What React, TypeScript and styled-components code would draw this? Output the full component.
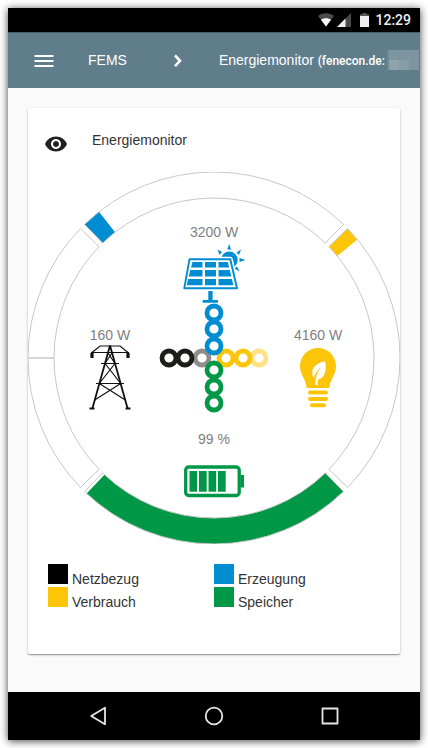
import React from "react";
import styled, { createGlobalStyle } from "styled-components";

const sans = `"Liberation Sans", Arial, sans-serif`;
const BLUE = "#008dd2";
const YELLOW = "#fdc507";
const GREEN = "#009846";
const BLACK = "#000000";

const GlobalStyle = createGlobalStyle`
  *, *::before, *::after { box-sizing: border-box; }
  body { margin: 0; background: #fff; font-family: ${sans}; font-size: 14px; line-height: 20px; }
`;

const Page = styled.div`
  min-height: 100vh;
  padding: 8px;
  display: flex;
`;

const Phone = styled.div`
  flex: 1;
  min-width: 0;
  display: flex;
  flex-direction: column;
  background: #fafafa;
  box-shadow: 0 1px 8px rgba(0, 0, 0, 0.75);
`;

const StatusBar = styled.div`
  height: 24px;
  padding: 0 9px;
  display: flex;
  align-items: center;
  justify-content: flex-end;
  gap: 3px;
  background: #000;
`;

const Battery = styled.svg`
  margin: 0 3px 0 6px;
`;

const Clock = styled.time`
  font: 500 14px/24px Roboto, ${sans};
  color: #eee;
`;

const Toolbar = styled.header`
  height: 56px;
  padding-left: 16px;
  display: flex;
  align-items: center;
  overflow: hidden;
  background: #607d8b;
  box-shadow: inset 0 1px 0 #4b5f69;
  color: #fff;
  white-space: nowrap;
`;

const IconButton = styled.button`
  width: 40px;
  height: 40px;
  flex: none;
  padding: 2px 0 0;
  border: 0;
  background: none;
  color: inherit;
  display: grid;
  place-items: center;
  cursor: pointer;
`;

const HomeLink = styled.a`
  margin-left: 24px;
  color: inherit;
  text-decoration: none;
`;

const Chevron = styled.svg`
  flex: none;
  margin: 0 29px 0 39px;
`;

const Crumb = styled.h1`
  margin: 0;
  font-size: 14px;
  font-weight: 400;
`;

const Device = styled.small`
  font: 500 12px/20px Roboto, ${sans};
`;

const Mosaic = styled.svg`
  flex: none;
`;

const Main = styled.main`
  flex: 1;
  display: flex;
  padding: 20px 20px 38px;
`;

const Card = styled.section`
  flex: 1;
  min-width: 0;
  background: #fff;
  border-radius: 2px;
  box-shadow: 0 1px 3px rgba(0, 0, 0, 0.2), 0 1px 1px rgba(0, 0, 0, 0.3);
`;

const CardHeader = styled.div`
  height: 64px;
  padding: 0 16px;
  display: flex;
  align-items: center;
  gap: 24px;
  color: #212121;
`;

const EyeIcon = styled.svg`
  margin-top: 8px;
`;

const CardTitle = styled.h2`
  margin: 0;
  font-size: 14px;
  font-weight: 400;
  color: #333;
`;

const Chart = styled.svg`
  display: block;
  width: 100%;
  height: auto;
`;

const ChartLabel = styled.text`
  font: 14px ${sans};
  fill: #808080;
  text-anchor: middle;
`;

const Legend = styled.ul`
  list-style: none;
  margin: 0;
  padding: 20px 20px 47px;
  display: grid;
  grid-template-columns: 1fr 1fr;
  row-gap: 3px;
`;

const LegendItem = styled.li`
  height: 20px;
  display: flex;
  align-items: baseline;
  gap: 4px;
  color: #333;
`;

const Swatch = styled.span<{ $color: string }>`
  width: 20px;
  height: 20px;
  background: ${(p) => p.$color};
`;

const NavBar = styled.nav`
  height: 48px;
  padding: 0 32px;
  display: flex;
  background: #000;
`;

const NavButton = styled.button`
  flex: 1;
  padding: 0;
  border: 0;
  background: none;
  display: grid;
  place-items: center;
  cursor: pointer;
`;

const OUTER = 186;
const INNER = 160;

function polar(radius: number, degrees: number) {
  const a = (degrees * Math.PI) / 180;
  return `${(radius * Math.sin(a)).toFixed(2)} ${(-radius * Math.cos(a)).toFixed(2)}`;
}

/* Ring segment between two angles, measured clockwise from the top. */
function segment(from: number, to: number) {
  return `M${polar(OUTER, from)}A${OUTER} ${OUTER} 0 0 1 ${polar(OUTER, to)}L${polar(INNER, to)}A${INNER} ${INNER} 0 0 0 ${polar(INNER, from)}Z`;
}

const sections = [
  [-44.1, 44.1],
  [45.9, 134.1],
  [135.9, 224.1],
  [225.9, 270],
  [270, 314.1],
];

const values = [
  { from: -44.1, to: -38.2, color: BLUE },
  { from: 45.9, to: 50.4, color: YELLOW },
  { from: 135.9, to: 223.2, color: GREEN },
];

const flow = [
  { x: -45, y: 0, color: "#1d1d1b", opacity: 1 },
  { x: -12, y: 0, color: "#1d1d1b", opacity: 0.5 },
  { x: -29, y: 0, color: "#1d1d1b", opacity: 1 },
  { x: 45, y: 0, color: YELLOW, opacity: 0.5 },
  { x: 29, y: 0, color: YELLOW, opacity: 1 },
  { x: 12, y: 0, color: YELLOW, opacity: 1 },
  { x: 0, y: -12, color: BLUE, opacity: 1 },
  { x: 0, y: -29, color: BLUE, opacity: 1 },
  { x: 0, y: -45, color: BLUE, opacity: 1 },
  { x: 0, y: 12, color: GREEN, opacity: 1 },
  { x: 0, y: 29, color: GREEN, opacity: 1 },
  { x: 0, y: 45, color: GREEN, opacity: 1 },
];

const legend = [
  { label: "Netzbezug", color: BLACK },
  { label: "Erzeugung", color: BLUE },
  { label: "Verbrauch", color: YELLOW },
  { label: "Speicher", color: GREEN },
];

function Pylon() {
  return (
    <g transform="translate(-104 0.5)" fill="none" stroke="#111" strokeWidth="1.2">
      <path strokeWidth="1.8" d="M0-13L-17.6 50M0-13L17.6 50" />
      <path d="M-18-6L-10-12.500H10L18-6M-19-6H19M-9 5H9M-14 25H14" />
      <path d="M-2.300-6L5 5M2.300-6L-5 5M-5 5L10.700 25M5 5L-10.700 25M-10.700 25L15.300 41.500M10.700 25L-15.300 41.500" />
      <path strokeWidth="3.200" d="M-18-5.500V-.5M18-5.500V-.5" />
      <path strokeWidth="2" d="M-20.500 50H-15.500M15.500 50H20.500" />
    </g>
  );
}

function SolarPanel() {
  return (
    <g fill={BLUE}>
      <circle cx="15.300" cy="-98" r="8.400" />
      <path d="M13.300-108.500h3.800l-1.900-5.500zM3.500-108.500l4.500 2.500-2.500 3zM27-108.500l-2 5.500-2.500-2.500zM25.500-100v4l6-2zM20.500-89.500l2.500-2 2.500 5z" />
      <path stroke="#fff" strokeWidth="4.500" strokeLinejoin="round" fill="#fff" d="M-25-99H16.500L23.500-70H-30.500Z" />
      <path stroke={BLUE} strokeWidth="1.900" strokeLinejoin="round" fill="#fff" d="M-24.500-98.800H16.300L23-69.800H-29.700Z" />
      <path d="M-21.500-96H-11.500V-90.500H-23zM-9-96H2V-90.500H-9zM4.500-96H13.800L15.200-90.500H4.500zM-23.700-88H-11.500V-81.500H-25.300zM-9-88H2V-81.500H-9zM4.500-88H15.800L17.300-81.500H4.500zM-25.900-79H-11.500V-72.700H-27.400zM-9-79H2V-72.700H-9zM4.500-79H17.900L19.400-72.700H4.500z" />
      <path d="M-5.700-67h4.300v9H4v2.700H-11.300V-58h5.600z" />
    </g>
  );
}

function Bulb() {
  return (
    <g transform="translate(104 8)" fill={YELLOW}>
      <path d="M0-18C10-18 18-10 18 0C18 9 12 13 11.300 22H-11.300C-12 13-18 9-18 0C-18-10-10-18 0-18Z" />
      <rect x="-10" y="24.500" width="20" height="4" rx="2" />
      <rect x="-10" y="31" width="20" height="4" rx="2" />
      <rect x="-8" y="37.300" width="16" height="4" rx="2" />
      <path fill="#fff" d="M7.300-4.500C1-4-5.500 0-5.700 6C-5.800 9-5 11-3.800 12.300C-3.600 8 0 3.500 2.700 1.500C0 5.500-2 9-1.800 12C-2.800 14-3 17-2.600 19H-.3C-.6 17-.4 15.500.2 13.500C7 12 8.500 4 7.300-4.500Z" />
    </g>
  );
}

function StorageBattery() {
  return (
    <g fill={GREEN}>
      <rect x="-28.300" y="109" width="53.500" height="28.500" rx="3" fill="none" stroke={GREEN} strokeWidth="3.300" />
      <rect x="26.500" y="117" width="3.500" height="12.500" />
      {[-24.5, -15, -5.5, 4].map((x) => (
        <rect key={x} x={x} y="113" width="7.700" height="20.700" />
      ))}
    </g>
  );
}

export default function App() {
  return (
    <Page>
      <GlobalStyle />
      <Phone>
        <StatusBar>
          <svg width="16" height="14" viewBox="0 0 16 14" aria-hidden="true">
            <path fill="#4a4a4a" d="M0 3C4.500-.6 11.500-.6 16 3L8 13.500Z" />
            <path fill="#fff" d="M3 6.800C6 4.800 10 4.800 13 6.800L8 13.500Z" />
          </svg>
          <svg width="14" height="14" viewBox="0 0 14 14" aria-hidden="true">
            <path fill="#4a4a4a" d="M14 0V14H0Z" />
            <path fill="#eee" d="M8.500 5.500V14H0Z" />
          </svg>
          <Battery width="9" height="14" viewBox="0 0 9 14" aria-hidden="true">
            <path fill="#555" d="M2.500 0h4v1.200H9V4H0V1.200h2.500z" />
            <path fill="#eee" d="M0 3h9v11H0z" />
          </Battery>
          <Clock>12:29</Clock>
        </StatusBar>

        <Toolbar>
          <IconButton type="button" aria-label="Menü">
            <svg width="20" height="14" viewBox="0 0 20 14" aria-hidden="true">
              <path stroke="#fff" strokeWidth="2" d="M.5 2h19M.5 7h19M.5 12h19" />
            </svg>
          </IconButton>
          <HomeLink href="#">FEMS</HomeLink>
          <Chevron width="24" height="24" viewBox="0 0 24 24" aria-hidden="true">
            <path fill="none" stroke="#fff" strokeWidth="2.600" d="M9 7.500L14 12.800L9 18.100" />
          </Chevron>
          <Crumb>
            Energiemonitor <Device>(fenecon.de:</Device>
          </Crumb>
          <Mosaic width="34" height="20" viewBox="0 0 34 20" aria-hidden="true">
            <path fill="#6e8996" d="M2 0h2v20H2z" />
            <path fill="#7d95a0" d="M4 0h30v20H4z" />
            <path fill="#8fa3ad" d="M4 10h10v10H4z" />
            <path fill="#879ca7" d="M14 10h10v10H14z" />
          </Mosaic>
        </Toolbar>

        <Main>
          <Card>
            <CardHeader>
              <EyeIcon width="24" height="24" viewBox="0 0 24 24" fill="currentColor" aria-hidden="true">
                <path d="M12 4.500C7 4.500 2.730 7.610 1 12c1.730 4.390 6 7.500 11 7.500s9.270-3.110 11-7.500c-1.730-4.390-6-7.500-11-7.500zM12 17c-2.760 0-5-2.240-5-5s2.240-5 5-5 5 2.240 5 5-2.240 5-5 5zm0-8c-1.660 0-3 1.340-3 3s1.340 3 3 3 3-1.340 3-3-1.340-3-3-3z" />
              </EyeIcon>
              <CardTitle>Energiemonitor</CardTitle>
            </CardHeader>

            <Chart viewBox="-186 -186 372 372" role="img" aria-label="Energiemonitor">
              {values.map((v) => (
                <path key={v.color} d={segment(v.from, v.to)} fill={v.color} />
              ))}
              {sections.map(([from, to]) => (
                <path key={from} d={segment(from, to)} fill="none" stroke="#c8c8c8" />
              ))}
              {flow.map((c) => (
                <circle key={`${c.x},${c.y}`} cx={c.x} cy={c.y} r="7" fill="none" stroke={c.color} strokeWidth="4.800" opacity={c.opacity} />
              ))}
              <SolarPanel />
              <Pylon />
              <Bulb />
              <StorageBattery />
              <ChartLabel x="0" y="-121">3200 W</ChartLabel>
              <ChartLabel x="-104" y="-18">160 W</ChartLabel>
              <ChartLabel x="104" y="-18">4160 W</ChartLabel>
              <ChartLabel x="0" y="86">99 %</ChartLabel>
            </Chart>

            <Legend>
              {legend.map((item) => (
                <LegendItem key={item.label}>
                  <Swatch $color={item.color} />
                  {item.label}
                </LegendItem>
              ))}
            </Legend>
          </Card>
        </Main>

        <NavBar>
          <NavButton type="button" aria-label="Zurück">
            <svg width="20" height="20" viewBox="0 0 20 20" fill="none" stroke="#e6e6e6" strokeWidth="1.800" strokeLinejoin="round" aria-hidden="true">
              <path d="M17 1.800V18.200L3.200 10Z" />
            </svg>
          </NavButton>
          <NavButton type="button" aria-label="Startseite">
            <svg width="20" height="20" viewBox="0 0 20 20" fill="none" stroke="#e6e6e6" strokeWidth="1.800" aria-hidden="true">
              <circle cx="10" cy="10" r="8.300" />
            </svg>
          </NavButton>
          <NavButton type="button" aria-label="Übersicht">
            <svg width="20" height="20" viewBox="0 0 20 20" fill="none" stroke="#e6e6e6" strokeWidth="1.800" strokeLinejoin="round" aria-hidden="true">
              <path d="M2.500 2.500h15v15h-15z" />
            </svg>
          </NavButton>
        </NavBar>
      </Phone>
    </Page>
  );
}
